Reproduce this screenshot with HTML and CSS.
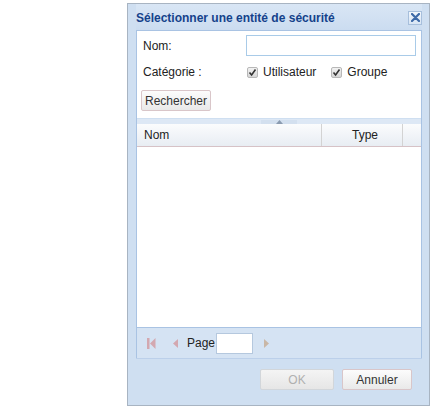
FILE: index.html
```html
<!DOCTYPE html>
<html lang="fr">
<head>
    <meta charset="UTF-8">
    <meta name="viewport" content="width=device-width, initial-scale=1.0">
    <title>Sélectionner une entité de sécurité</title>
    <link rel="stylesheet" href="styles.css">
</head>
<body>
    <div class="window">
        <div class="window-header">
            <span class="window-title">Sélectionner une entité de sécurité</span>
            <span class="tool-close">
                <svg width="9" height="9" viewBox="0 0 9 9"><path d="M1 1L8 8M8 1L1 8" stroke="#3d6aa8" stroke-width="2.2" stroke-linecap="round"/></svg>
            </span>
        </div>

        <div class="window-body">
            <div class="form">
                <div class="field-row">
                    <label for="nom">Nom:</label>
                    <input id="nom" type="text" />
                </div>
                <div class="field-row cat-row">
                    <label>Catégorie :</label>
                    <span class="check"><span class="box"><svg width="9" height="9" viewBox="0 0 9 9"><path d="M1.5 4.5L3.6 7L7.5 1.5" fill="none" stroke="#333" stroke-width="1.6"/></svg></span>Utilisateur</span>
                    <span class="check"><span class="box"><svg width="9" height="9" viewBox="0 0 9 9"><path d="M1.5 4.5L3.6 7L7.5 1.5" fill="none" stroke="#333" stroke-width="1.6"/></svg></span>Groupe</span>
                </div>
                <button class="btn btn-search">Rechercher</button>
            </div>

            <div class="splitter"><span class="mini"><svg width="7" height="4" viewBox="0 0 7 4"><path d="M0 4L3.5 0L7 4Z" fill="#8a9bb0"/></svg></span></div>

            <div class="grid">
                <div class="grid-header">
                    <div class="col col-nom">Nom</div>
                    <div class="col col-type">Type</div>
                    <div class="col col-rest"></div>
                </div>
                <div class="grid-body"></div>
            </div>

            <div class="pager">
                <span class="pg-icon">
                    <svg width="9" height="11" viewBox="0 0 9 11"><rect x="0" y="0" width="2.5" height="11" fill="#d3a8b0"/><path d="M8.5 0L3 5.5L8.5 11Z" fill="#d3a8b0"/></svg>
                </span>
                <span class="pg-icon pg-prev">
                    <svg width="5" height="9" viewBox="0 0 5 9"><path d="M5 0L0 4.5L5 9Z" fill="#d3a8b0"/></svg>
                </span>
                <span class="pg-label">Page</span>
                <input class="pg-input" type="text" />
                <span class="pg-icon pg-next">
                    <svg width="5" height="9" viewBox="0 0 5 9"><path d="M0 0L5 4.5L0 9Z" fill="#c9b7a6"/></svg>
                </span>
            </div>
        </div>

        <div class="window-footer">
            <button class="btn btn-ok" disabled>OK</button>
            <button class="btn btn-cancel">Annuler</button>
        </div>
    </div>
</body>
</html>
```

FILE: styles.css
```css
* {
    margin: 0;
    padding: 0;
    box-sizing: border-box;
}
body {
    background: #fff;
    font-family: "Liberation Sans", Arial, sans-serif;
    font-size: 12px;
    color: #222;
}
.window {
    width: 303px;
    height: 403px;
    margin: 3px 0 0 127px;
    background: #cfdff1;
    border: 1px solid #a8b4c2;
    padding: 0 7px 0 8px;
    display: flex;
    flex-direction: column;
}
.window-header {
    height: 26px;
    display: flex;
    align-items: center;
    justify-content: space-between;
    background: linear-gradient(#d9e6f5, #cbdcf0);
}
.window-title {
    font-weight: 700;
    color: #15428b;
    font-size: 12px;
    padding-top: 1px;
}
.tool-close {
    width: 14px;
    height: 14px;
    border: 1px solid #a7bfdc;
    background: linear-gradient(#f1f6fc, #d8e5f4);
    display: flex;
    align-items: center;
    justify-content: center;
    margin-top: 1px;
}
.window-body {
    background: #fff;
    border: 1px solid #a9c3e3;
    border-bottom: none;
    display: flex;
    flex-direction: column;
}
.form {
    height: 87px;
    padding: 4px 4px 0 6px;
}
.field-row {
    display: flex;
    align-items: center;
    height: 21px;
}
.field-row label {
    width: 103px;
    font-size: 12px;
    color: #222;
}
.field-row input {
    width: 170px;
    height: 21px;
    border: 1px solid #a9cbe8;
    background: #fff;
    outline: none;
}
.cat-row {
    margin-top: 7px;
    height: 18px;
}
.check {
    display: flex;
    align-items: center;
    margin-left: 1px;
    margin-right: 14px;
}
.check .box {
    width: 11px;
    height: 11px;
    border: 1px solid #b8b8b8;
    border-radius: 2px;
    background: linear-gradient(#f2f2f2, #d6d6d6);
    display: flex;
    align-items: center;
    justify-content: center;
    margin-right: 5px;
}
.btn {
    font-family: "Liberation Sans", Arial, sans-serif;
    font-size: 12px;
    height: 21px;
    color: #333;
    border: 1px solid #d9c6c9;
    border-radius: 2px;
    background: linear-gradient(#fcfcfc, #e9e9e9);
}
.btn-search {
    width: 70px;
    margin: 9px 0 0 -2px;
}
.splitter {
    height: 6px;
    background: #dde8f5;
    border-top: 1px solid #cfdff1;
    display: flex;
    justify-content: center;
    align-items: center;
}
.mini {
    width: 36px;
    height: 4px;
    background: #d3e0ef;
    display: flex;
    justify-content: center;
    align-items: center;
}
.grid-header {
    display: flex;
    height: 23px;
    background: linear-gradient(#fbfcfd, #e8edf3);
    border-bottom: 1px solid #d6c2c6;
}
.col {
    display: flex;
    align-items: center;
    font-size: 12px;
    color: #222;
}
.col-nom {
    width: 185px;
    padding-left: 7px;
    border-right: 1px solid #d3d3d3;
}
.col-type {
    width: 81px;
    justify-content: center;
    padding-left: 6px;
    border-right: 1px solid #d3d3d3;
}
.col-rest {
    flex: 1;
}
.grid-body {
    height: 180px;
    background: #fff;
}
.pager {
    height: 31px;
    background: #d5e3f3;
    border-top: 1px solid #a9c3e3;
    display: flex;
    align-items: center;
    padding-left: 10px;
}
.pg-icon {
    display: flex;
    align-items: center;
}
.pg-prev {
    margin-left: 17px;
}
.pg-label {
    margin-left: 9px;
    font-size: 12px;
    color: #222;
}
.pg-input {
    width: 37px;
    height: 21px;
    margin-left: 1px;
    border: 1px solid #b5c8de;
    background: #fff;
    outline: none;
}
.pg-next {
    margin-left: 11px;
}
.window-footer {
    flex: 1;
    border-top: 1px solid #bcd0ea;
    display: flex;
    justify-content: flex-end;
    align-items: flex-start;
    gap: 8px;
    padding: 10px 10px 0 0;
}
.btn-ok {
    width: 74px;
    color: #b0b0b0;
    border-color: #d2d6da;
    background: linear-gradient(#f4f4f4, #e6e6e6);
}
.btn-cancel {
    width: 70px;
}
```
